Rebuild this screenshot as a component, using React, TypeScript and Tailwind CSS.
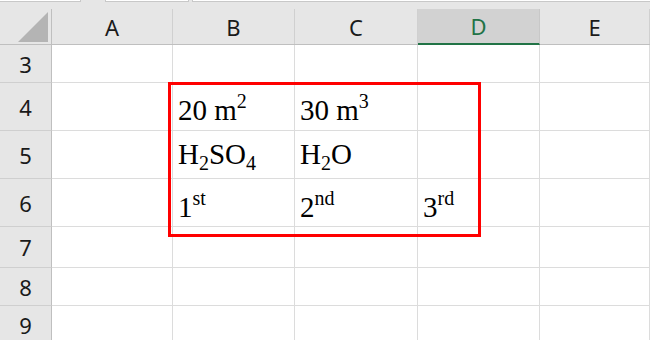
import React from 'react';

const cols = ['A', 'B', 'C', 'D', 'E'];
const widths = ['w-[121px]', 'w-[122px]', 'w-[123px]', 'w-[122px]', 'flex-1'];

const Sup = ({ children }: { children: React.ReactNode }) => (
  <span className="relative -top-[12px] align-baseline text-[20px] leading-none">{children}</span>
);
const Sub = ({ children }: { children: React.ReactNode }) => (
  <span className="relative top-[6px] align-baseline text-[20px] leading-none">{children}</span>
);

type Row = { n: number; h: string; pb: string; cells: React.ReactNode[] };

const rows: Row[] = [
  { n: 3, h: 'h-[38px]', pb: 'pb-[5px]', cells: [] },
  {
    n: 4,
    h: 'h-[48px]',
    pb: 'pb-[5px]',
    cells: [null, <>20 m<Sup>2</Sup></>, <>30 m<Sup>3</Sup></>],
  },
  {
    n: 5,
    h: 'h-[48px]',
    pb: 'pb-[9px]',
    cells: [null, <>H<Sub>2</Sub>SO<Sub>4</Sub></>, <>H<Sub>2</Sub>O</>],
  },
  {
    n: 6,
    h: 'h-[48px]',
    pb: 'pb-[4px]',
    cells: [null, <>1<Sup>st</Sup></>, <>2<Sup>nd</Sup></>, <>3<Sup>rd</Sup></>],
  },
  { n: 7, h: 'h-[41px]', pb: 'pb-[5px]', cells: [] },
  { n: 8, h: 'h-[38px]', pb: 'pb-[5px]', cells: [] },
  { n: 9, h: 'h-[38px]', pb: 'pb-[5px]', cells: [] },
];

export default function App() {
  return (
    <div className="relative w-[650px] h-[340px] overflow-hidden bg-white font-['Noto_Sans',sans-serif]">
      {/* sliver of the formula bar */}
      <div className="flex h-[9px] bg-[#e6e6e6]">
        <div className="h-[2px] w-[81px] bg-white border-b border-r border-[#c8c8c8]" />
        <div className="h-[2px] w-[84px] ml-[24px] bg-white border-b border-x border-[#c8c8c8]" />
        <div className="h-[2px] flex-1 ml-[3px] bg-white border-b border-l border-[#c8c8c8]" />
      </div>

      {/* column headers */}
      <div className="flex h-[36px] bg-[#e6e6e6] border-b border-[#bfbfbf]">
        <div className="relative w-[52px] border-r border-[#bfbfbf]">
          <div className="absolute right-[3px] bottom-[2px] w-0 h-0 border-l-[30px] border-l-transparent border-b-[30px] border-b-[#b4b4b4]" />
        </div>
        {cols.map((c, i) => (
          <div
            key={c}
            className={`${widths[i]} flex items-center justify-center text-[22px] leading-none ${
              c === 'D'
                ? 'bg-[#d2d2d2] text-[#217346] border-b-2 border-[#217346] -mb-px border-r border-r-[#c8c8c8]'
                : 'text-[#1a1a1a] border-r border-[#d0d0d0]'
            }`}
          >
            {c}
          </div>
        ))}
      </div>

      {rows.map((r) => (
        <div key={r.n} className={`flex ${r.h}`}>
          <div className="w-[52px] flex items-center justify-center bg-[#e6e6e6] border-r border-[#bfbfbf] border-b border-b-[#cfcfcf] text-[22px] leading-none text-[#1a1a1a]">
            {r.n}
          </div>
          {cols.map((c, i) => (
            <div
              key={c}
              className={`${widths[i]} flex items-end pl-[5px] ${r.pb} border-r border-b border-[#dcdcdc] font-['Liberation_Serif',serif] text-[29px] leading-none text-black whitespace-nowrap`}
            >
              {r.cells[i] ? <span>{r.cells[i]}</span> : null}
            </div>
          ))}
        </div>
      ))}

      {/* drawn red rectangle */}
      <div className="absolute left-[168px] top-[82px] w-[313px] h-[155px] border-[3px] border-[#ff0000]" />
    </div>
  );
}
